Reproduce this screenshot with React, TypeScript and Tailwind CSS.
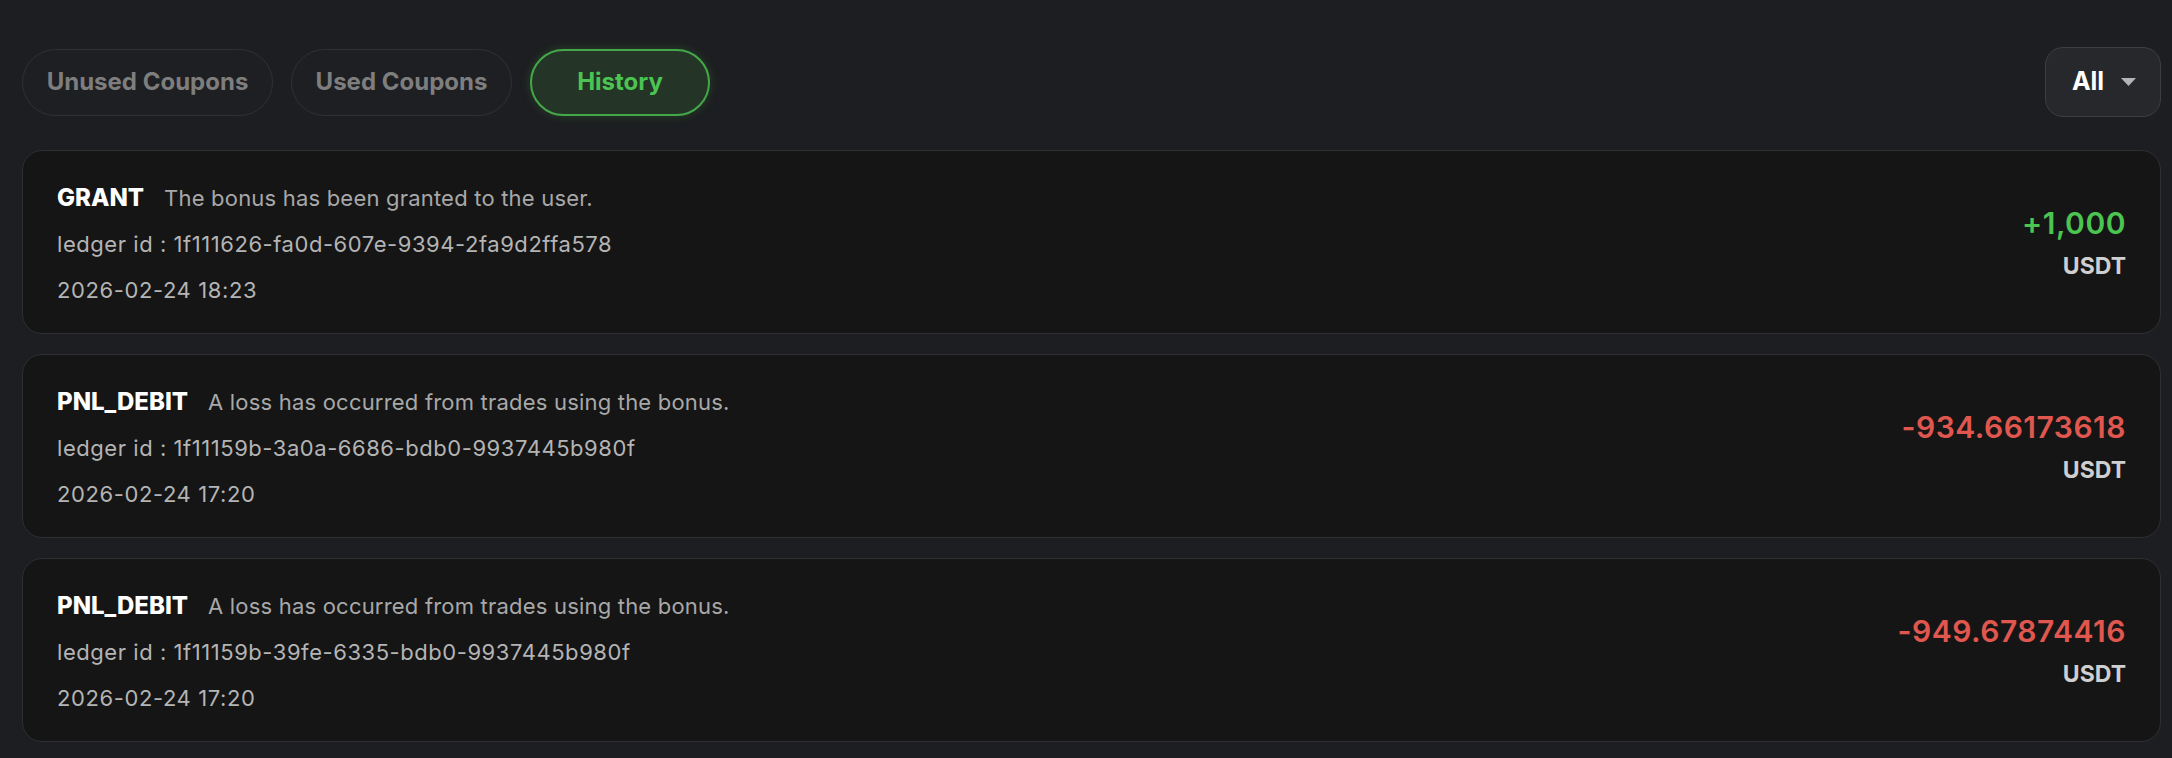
import React from "react";

type Item = {
  type: string;
  desc: string;
  ledger: string;
  date: string;
  amount: string;
  positive: boolean;
};

const items: Item[] = [
  {
    type: "GRANT",
    desc: "The bonus has been granted to the user.",
    ledger: "1f111626-fa0d-607e-9394-2fa9d2ffa578",
    date: "2026-02-24 18:23",
    amount: "+1,000",
    positive: true,
  },
  {
    type: "PNL_DEBIT",
    desc: "A loss has occurred from trades using the bonus.",
    ledger: "1f11159b-3a0a-6686-bdb0-9937445b980f",
    date: "2026-02-24 17:20",
    amount: "-934.66173618",
    positive: false,
  },
  {
    type: "PNL_DEBIT",
    desc: "A loss has occurred from trades using the bonus.",
    ledger: "1f11159b-39fe-6335-bdb0-9937445b980f",
    date: "2026-02-24 17:20",
    amount: "-949.67874416",
    positive: false,
  },
];

function Card({ item }: { item: Item }) {
  return (
    <div className="flex h-[184px] justify-between rounded-[20px] border border-[#2e2f31] bg-[#151515] px-[34px]">
      <div className="mt-[24px] flex flex-col">
        <div className="flex items-baseline leading-[46px]">
          <span className="text-[24px] font-extrabold text-white">{item.type}</span>
          <span className="ml-[20px] text-[22px] tracking-[0.2px] text-[#a8a8a8]">{item.desc}</span>
        </div>
        <div className="text-[22px] leading-[46px] tracking-[0.55px] text-[#b4b4b4]">
          ledger id : {item.ledger}
        </div>
        <div className="text-[22px] leading-[46px] tracking-[0.6px] text-[#b4b4b4]">{item.date}</div>
      </div>
      <div className="flex flex-col items-end self-center">
        <div
          className={
            item.positive
              ? "text-[30px] font-semibold leading-[44px] tracking-[0.5px] text-[#4cc452]"
              : "text-[30px] font-semibold leading-[44px] tracking-[0.5px] text-[#e0574f]"
          }
        >
          {item.amount}
        </div>
        <div className="mt-[3.5px] text-[23px] font-bold leading-[34px] text-[#cfcfcf]">USDT</div>
      </div>
    </div>
  );
}

export default function App() {
  return (
    <div className="min-h-[758px] bg-[#1d1e21] pl-[22px] pr-[11px] pt-[47px] font-['Inter',sans-serif]">
      <div className="flex h-[70px] items-center justify-between">
        <div className="flex items-center gap-[18px]">
          <button className="flex h-[67px] w-[251px] items-center justify-center rounded-full border-[1.5px] border-[#303134] bg-[#1e1f22] text-[24px] font-bold text-[#7e7e7e]">
            Unused Coupons
          </button>
          <button className="flex h-[67px] w-[221px] items-center justify-center rounded-full border-[1.5px] border-[#303134] bg-[#1e1f22] text-[24px] font-bold text-[#7e7e7e]">
            Used Coupons
          </button>
          <button className="flex h-[67px] w-[180px] items-center justify-center rounded-full border-2 border-[#44a849] bg-[#243527] text-[24px] font-bold text-[#4cc452] shadow-[0_0_10px_rgba(70,180,75,0.25)]">
            History
          </button>
        </div>
        <button className="flex h-[70px] w-[116px] items-center justify-center gap-[17px] rounded-[18px] border-[1.5px] border-[#3d3e41] bg-[#27282b] pl-[2px]">
          <span className="text-[25px] font-bold text-white">All</span>
          <svg width="15" height="8" viewBox="0 0 15 8">
            <path d="M0 0 L15 0 L7.5 8 Z" fill="#b4b4b4" />
          </svg>
        </button>
      </div>
      <div className="mt-[33px] flex flex-col gap-[20px]">
        {items.map((it, i) => (
          <Card key={i} item={it} />
        ))}
      </div>
    </div>
  );
}
